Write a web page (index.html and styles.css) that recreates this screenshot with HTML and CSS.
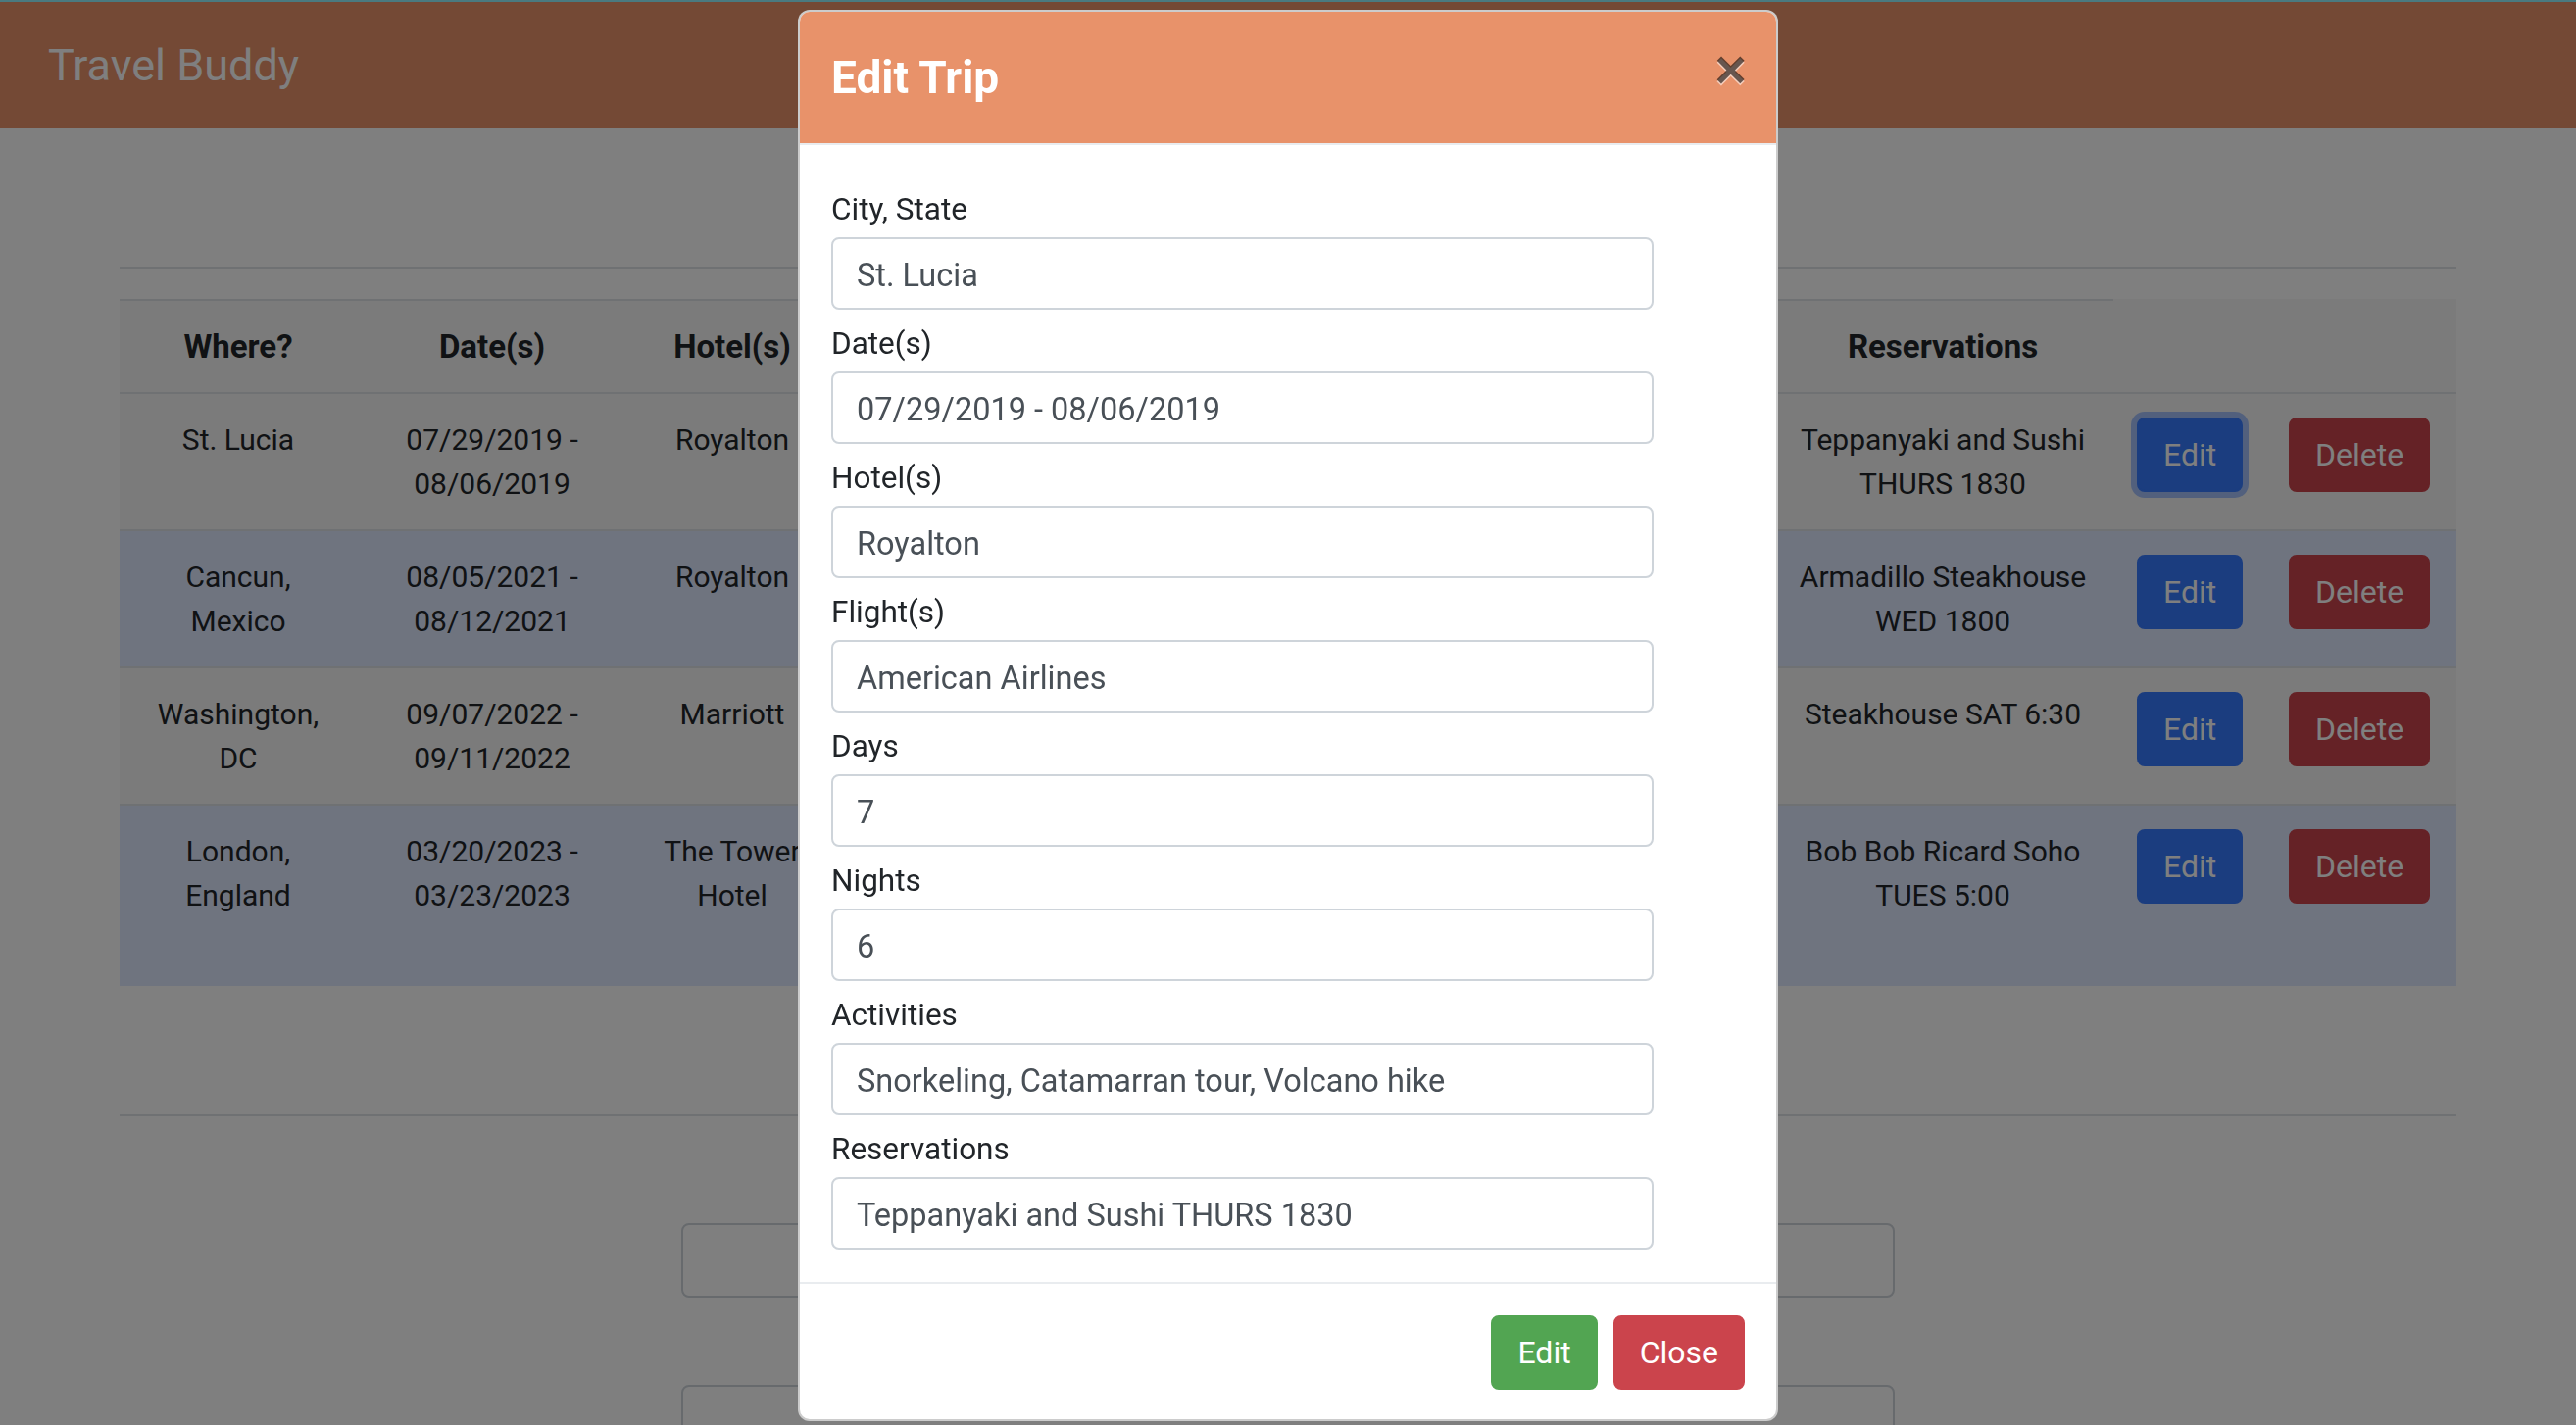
FILE: index.html
```html
<!DOCTYPE html>
<html lang="en">
<head>
<meta charset="utf-8">
<title>Travel Buddy</title>
<link rel="stylesheet" href="styles.css">
</head>
<body>
<div class="topline"></div>
<nav class="navbar"><span class="brand">Travel Buddy</span></nav>

<main class="container">
  <hr class="rule rule-top">
  <table class="trips">
    <colgroup>
      <col class="c-where"><col class="c-date"><col class="c-hotel"><col class="c-covered"><col class="c-res"><col class="c-edit"><col class="c-del">
    </colgroup>
    <thead>
      <tr>
        <th>Where?</th><th>Date(s)</th><th>Hotel(s)</th><th class="covered"></th><th>Reservations</th><td class="blank" colspan="2"></td>
      </tr>
    </thead>
    <tbody>
      <tr>
        <td>St. Lucia</td><td>07/29/2019 - 08/06/2019</td><td>Royalton</td><td class="covered"></td><td>Teppanyaki and Sushi THURS 1830</td>
        <td class="act"><button class="btn btn-primary is-focused" type="button">Edit</button></td><td class="act"><button class="btn btn-danger" type="button">Delete</button></td>
      </tr>
      <tr>
        <td>Cancun, Mexico</td><td>08/05/2021 - 08/12/2021</td><td>Royalton</td><td class="covered"></td><td>Armadillo Steakhouse WED 1800</td>
        <td class="act"><button class="btn btn-primary" type="button">Edit</button></td><td class="act"><button class="btn btn-danger" type="button">Delete</button></td>
      </tr>
      <tr>
        <td>Washington, DC</td><td>09/07/2022 - 09/11/2022</td><td>Marriott</td><td class="covered"></td><td>Steakhouse SAT 6:30</td>
        <td class="act"><button class="btn btn-primary" type="button">Edit</button></td><td class="act"><button class="btn btn-danger" type="button">Delete</button></td>
      </tr>
      <tr class="row-tall">
        <td>London, England</td><td>03/20/2023 - 03/23/2023</td><td>The Tower Hotel</td><td class="covered"></td><td>Bob Bob Ricard Soho TUES 5:00</td>
        <td class="act"><button class="btn btn-primary" type="button">Edit</button></td><td class="act"><button class="btn btn-danger" type="button">Delete</button></td>
      </tr>
    </tbody>
  </table>
  <hr class="rule rule-bottom">

  <form class="add-form">
    <div class="add-group"><input class="add-input" type="text" aria-label="City, State"></div>
    <div class="add-group"><input class="add-input" type="text" aria-label="Date(s)"></div>
  </form>
</main>

<div class="backdrop"></div>

<div class="modal-layer">
  <div class="modal-dialog">
    <div class="modal-content">
      <div class="modal-header">
        <h4 class="modal-title">Edit Trip</h4>
        <button class="close" type="button" aria-label="Close">&times;</button>
      </div>
      <div class="modal-body">
        <div class="field"><label class="field-label">City, State</label><input class="field-input" type="text" value="St. Lucia"></div>
        <div class="field"><label class="field-label">Date(s)</label><input class="field-input" type="text" value="07/29/2019 - 08/06/2019"></div>
        <div class="field"><label class="field-label">Hotel(s)</label><input class="field-input" type="text" value="Royalton"></div>
        <div class="field"><label class="field-label">Flight(s)</label><input class="field-input" type="text" value="American Airlines"></div>
        <div class="field"><label class="field-label">Days</label><input class="field-input" type="text" value="7"></div>
        <div class="field"><label class="field-label">Nights</label><input class="field-input" type="text" value="6"></div>
        <div class="field"><label class="field-label">Activities</label><input class="field-input" type="text" value="Snorkeling, Catamarran tour, Volcano hike"></div>
        <div class="field"><label class="field-label">Reservations</label><input class="field-input" type="text" value="Teppanyaki and Sushi THURS 1830"></div>
      </div>
      <div class="modal-footer">
        <button class="btn btn-success" type="button">Edit</button>
        <button class="btn btn-danger" type="button">Close</button>
      </div>
    </div>
  </div>
</div>
</body>
</html>
```
FILE: styles.css
```css
* { box-sizing: border-box; }

html, body {
  margin: 0;
  padding: 0;
}

body {
  width: 2628px;
  height: 1454px;
  overflow: hidden;
  background: #ffffff;
  color: #212529;
  font-family: Roboto, "Liberation Sans", Arial, sans-serif;
  font-size: 30px;
  line-height: 1.5;
}

.topline {
  position: relative;
  z-index: 30;
  height: 2px;
  background: #4a7a80;
}

.navbar {
  height: 129px;
  background: #e8926a;
  display: flex;
  align-items: center;
  padding: 0 49px;
}

.brand {
  font-size: 45px;
  line-height: 1;
  color: #ffffff;
}

.container {
  width: 2384px;
  margin: 0 auto;
}

.rule {
  border: 0;
  border-top: 2px solid #dee2e6;
  margin: 0;
  height: 0;
}

.rule-top { margin-top: 141px; }
.rule-bottom { margin-top: 131px; }

.trips {
  margin-top: 31px;
  width: 100%;
  border-collapse: collapse;
  table-layout: fixed;
  background: #f6f6f6;
  font-size: 30px;
  line-height: 45px;
}

.c-where { width: 242px; }
.c-date { width: 276px; }
.c-hotel { width: 214px; }
.c-covered { width: 954px; }
.c-res { width: 348px; }
.c-edit { width: 155px; }
.c-del { width: 195px; }

.trips th,
.trips td {
  padding: 24px;
  text-align: center;
  vertical-align: top;
}

.trips th {
  font-size: 33px;
  font-weight: 700;
  border-top: 2px solid #dee2e6;
}

.trips td { border-top: 2px solid #dee2e6; }

.trips thead .blank { border-top: 0; }

.trips tbody tr:nth-child(even) { background: #dfe8ff; }

.trips .row-tall { height: 185px; }

.trips .act { text-align: left; }

.btn {
  display: inline-flex;
  align-items: center;
  justify-content: center;
  height: 76px;
  padding: 0 25px;
  border: 2px solid transparent;
  border-radius: 8px;
  color: #ffffff;
  font-family: Roboto, "Liberation Sans", Arial, sans-serif;
  font-size: 32px;
  line-height: 1;
  cursor: pointer;
}

.btn-primary { background: #367afe; border-color: #367afe; }
.btn-danger { background: #cb444c; border-color: #cb444c; }
.btn-success { background: #52a552; border-color: #52a552; }

.is-focused { box-shadow: 0 0 0 6px rgba(96, 150, 255, 0.55); }

.add-form {
  width: 1238px;
  margin: 109px auto 0;
}

.add-group { margin-bottom: 89px; }

.add-input {
  display: block;
  width: 100%;
  height: 76px;
  border: 2px solid #ced4da;
  border-radius: 8px;
  background: #ffffff;
}

.backdrop {
  position: fixed;
  inset: 0;
  z-index: 10;
  background: rgba(0, 0, 0, 0.5);
}

.modal-layer {
  position: fixed;
  inset: 0;
  z-index: 20;
}

.modal-dialog {
  width: 1000px;
  margin: 10px auto 0;
}

.modal-content {
  background: #ffffff;
  border: 2px solid rgba(0, 0, 0, 0.2);
  border-radius: 12px;
  overflow: hidden;
}

.modal-header {
  height: 136px;
  background: #e8926a;
  border-bottom: 2px solid #e9ecef;
  display: flex;
  align-items: center;
  justify-content: space-between;
  padding: 0 32px;
}

.modal-title {
  margin: 0;
  color: #ffffff;
  font-size: 46px;
  font-weight: 700;
  line-height: 1;
}

.close {
  background: none;
  border: 0;
  padding: 0;
  margin: 0 -2px 16px 0;
  color: rgba(0, 0, 0, 0.58);
  font-family: "Liberation Sans", Arial, sans-serif;
  font-size: 56px;
  font-weight: 700;
  line-height: 1;
  text-shadow: 0 2px 0 rgba(255, 255, 255, 0.55);
}

.modal-body { padding: 47px 32px 17px; }

.field { margin-bottom: 16px; }

.field-label {
  display: block;
  font-size: 31.5px;
  line-height: 38px;
  margin-bottom: 9px;
  color: #212529;
}

.field-input {
  display: block;
  width: 90%;
  height: 74px;
  padding: 4px 24px 0;
  border: 2px solid #ced4da;
  border-radius: 8px;
  background: #ffffff;
  color: #495057;
  font-family: Roboto, "Liberation Sans", Arial, sans-serif;
  font-size: 32.5px;
}

.modal-footer {
  border-top: 2px solid #e9ecef;
  padding: 32px 32px 30px;
  display: flex;
  justify-content: flex-end;
  gap: 16px;
}
```
